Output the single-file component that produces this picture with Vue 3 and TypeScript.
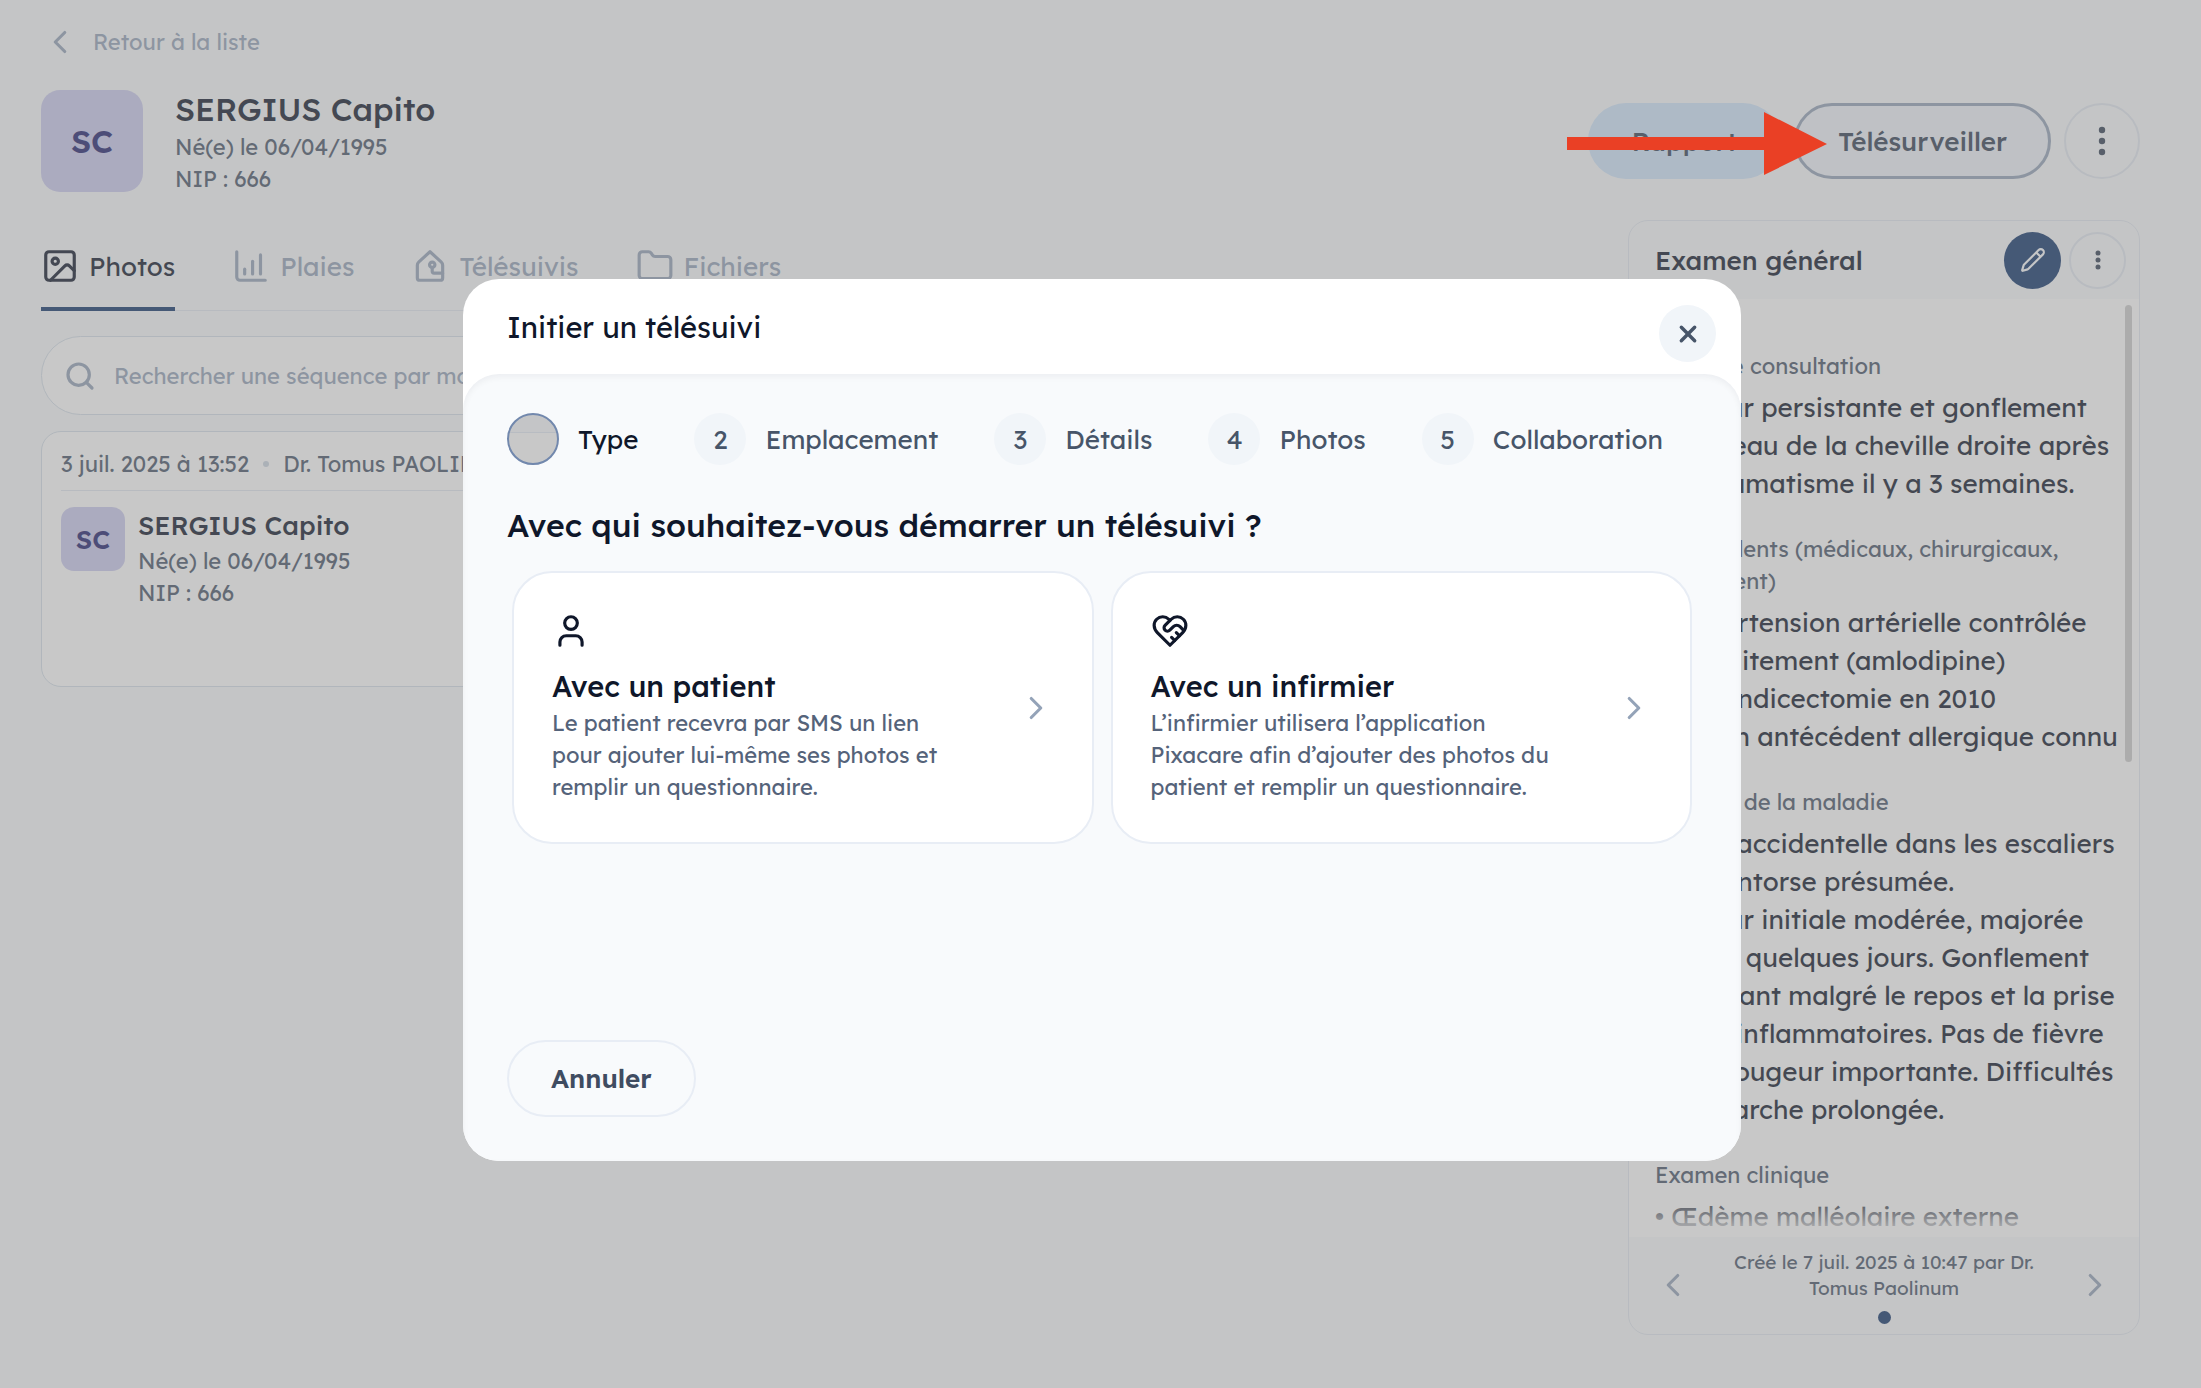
<script setup lang="ts">
import { ref } from 'vue'

const search = ref('')

interface Tab { label: string; icon: string[]; active?: boolean }
const tabs: Tab[] = [
  {
    label: 'Photos',
    active: true,
    icon: [
      'M5 3h14a2 2 0 0 1 2 2v14a2 2 0 0 1-2 2H5a2 2 0 0 1-2-2V5a2 2 0 0 1 2-2z',
      'M7 9a2 2 0 1 0 4 0a2 2 0 1 0-4 0',
      'M21 15l-3.086-3.086a2 2 0 0 0-2.828 0L6 21',
    ],
  },
  { label: 'Plaies', icon: ['M3 3v16a2 2 0 0 0 2 2h16', 'M8 17v-3', 'M13 17V9', 'M18 17V5'] },
  {
    label: 'Télésuivis',
    icon: [
      'M12 3l7 6.400a3 3 0 0 1 1 2.200V19.500a1.500 1.500 0 0 1-1.500 1.500h-13a1.500 1.500 0 0 1-1.500-1.500v-7.900a3 3 0 0 1 1-2.200z',
      'M11.700 11.200a1.700 1.700 0 1 0 3.400 0a1.700 1.700 0 1 0-3.400 0',
      'M13.400 13v2.300a1.200 1.200 0 0 0 1.200 1.200H20',
    ],
  },
  {
    label: 'Fichiers',
    icon: ['M20 20a2 2 0 0 0 2-2V8a2 2 0 0 0-2-2h-7.900a2 2 0 0 1-1.690-.9L9.600 3.900A2 2 0 0 0 7.930 3H4a2 2 0 0 0-2 2v13a2 2 0 0 0 2 2z'],
  },
]

const sections = [
  {
    label: 'Motif de consultation',
    text: 'Douleur persistante et gonflement\nau niveau de la cheville droite après\nun traumatisme il y a 3 semaines.',
  },
  {
    label: 'Antécédents (médicaux, chirurgicaux,\ntraitement)',
    text: '• Hypertension artérielle contrôlée\npar traitement (amlodipine)\n• Appendicectomie en 2010\n• Aucun antécédent allergique connu',
  },
  {
    label: 'Histoire de la maladie',
    text: 'Chute accidentelle dans les escaliers\navec entorse présumée.\nDouleur initiale modérée, majorée\ndepuis quelques jours. Gonflement\npersistant malgré le repos et la prise\nd’anti-inflammatoires. Pas de fièvre\nni de rougeur importante. Difficultés\nà la marche prolongée.',
  },
  { label: 'Examen clinique', text: '• Œdème malléolaire externe' },
]

const steps = ['Type', 'Emplacement', 'Détails', 'Photos', 'Collaboration']

const choices = [
  {
    title: 'Avec un patient',
    text: 'Le patient recevra par SMS un lien\npour ajouter lui-même ses photos et\nremplir un questionnaire.',
    icon: ['M8 7a4 4 0 1 0 8 0a4 4 0 1 0-8 0', 'M19 21v-2a4 4 0 0 0-4-4H9a4 4 0 0 0-4 4v2'],
  },
  {
    title: 'Avec un infirmier',
    text: 'L’infirmier utilisera l’application\nPixacare afin d’ajouter des photos du\npatient et remplir un questionnaire.',
    icon: [
      'M20.420 4.580a5.400 5.400 0 0 0-7.650 0l-.77.78-.77-.78a5.400 5.400 0 0 0-7.650 0C1.460 6.700 1.330 10.280 4 13l8 8 8-8c2.670-2.720 2.540-6.300.42-8.420z',
      'M12 5.360L8.870 8.500a2.130 2.130 0 0 0 0 3a2.130 2.130 0 0 0 3 0l2.260-2.210a3 3 0 0 1 4.220 0l2.400 2.400',
      'M18 15l-2-2',
      'M15 18l-2-2',
    ],
  },
]
</script>

<template>
  <div class="page">
    <a class="back" href="#">
      <svg class="icon" viewBox="0 0 24 24"><path d="M15 18l-6-6 6-6" /></svg>
      Retour à la liste
    </a>

    <header class="patient-bar">
      <div class="avatar avatar-lg">SC</div>
      <div class="identity">
        <h1>SERGIUS Capito</h1>
        <p>Né(e) le 06/04/1995</p>
        <p>NIP : 666</p>
      </div>
      <div class="actions">
        <button class="btn btn-report" type="button">Rapport</button>
        <button class="btn btn-outline" type="button">Télésurveiller</button>
        <button class="round round-lg" type="button" aria-label="Plus d’actions">
          <svg class="dots" width="32" height="40" viewBox="0 0 32 40"><circle cx="16" cy="9" r="3.200" /><circle cx="16" cy="20" r="3.200" /><circle cx="16" cy="31" r="3.200" /></svg>
        </button>
      </div>
    </header>

    <div class="columns">
      <main class="main">
        <nav class="tabs">
          <a v-for="t in tabs" :key="t.label" href="#" class="tab" :class="{ active: t.active }">
            <svg class="icon" viewBox="0 0 24 24"><path v-for="d in t.icon" :key="d" :d="d" /></svg>
            {{ t.label }}
          </a>
        </nav>
        <label class="search">
          <svg width="32" height="32" viewBox="0 0 24 24"><circle cx="11" cy="11" r="8" /><path d="M21 21l-4.300-4.300" /></svg>
          <input v-model="search" type="text" aria-label="Rechercher" placeholder="Rechercher une séquence par mot-clé" />
        </label>
        <article class="sequence">
          <div class="sequence-meta">
            <span>3 juil. 2025 à 13:52</span><i class="sep"></i><span>Dr. Tomus PAOLINUM</span>
          </div>
          <div class="sequence-body">
            <div class="avatar avatar-sm">SC</div>
            <div class="identity identity-sm">
              <h2>SERGIUS Capito</h2>
              <p>Né(e) le 06/04/1995</p>
              <p>NIP : 666</p>
            </div>
          </div>
        </article>
      </main>

      <aside class="panel">
        <div class="panel-head">
          <h2>Examen général</h2>
          <button class="round round-sm primary" type="button" aria-label="Modifier">
            <svg width="26" height="26" viewBox="0 0 24 24"><path d="M21.174 6.812a1 1 0 0 0-3.986-3.987L3.842 16.174a2 2 0 0 0-.5.83l-1.321 4.352a.5.5 0 0 0 .623.622l4.353-1.320a2 2 0 0 0 .83-.497zM15 5l4 4" /></svg>
          </button>
          <button class="round round-sm" type="button" aria-label="Options">
            <svg class="dots" width="24" height="30" viewBox="0 0 24 30"><circle cx="12" cy="8" r="2.500" /><circle cx="12" cy="15" r="2.500" /><circle cx="12" cy="22" r="2.500" /></svg>
          </button>
        </div>
        <div class="panel-body">
          <section v-for="s in sections" :key="s.label">
            <h3>{{ s.label }}</h3>
            <p>{{ s.text }}</p>
          </section>
          <span class="scroll-thumb"></span>
        </div>
        <footer class="panel-foot">
          <div class="pager">
            <button type="button" aria-label="Précédent"><svg class="icon" viewBox="0 0 24 24"><path d="M15 18l-6-6 6-6" /></svg></button>
            <p>Créé le 7 juil. 2025 à 10:47 par Dr. Tomus Paolinum</p>
            <button type="button" aria-label="Suivant"><svg class="icon" viewBox="0 0 24 24"><path d="M9 18l6-6-6-6" /></svg></button>
          </div>
          <i class="page-dot"></i>
        </footer>
      </aside>
    </div>

    <div class="overlay">
      <div class="modal" role="dialog" aria-labelledby="modal-title">
        <div class="modal-head">
          <h2 id="modal-title">Initier un télésuivi</h2>
          <button class="close" type="button" aria-label="Fermer">
            <svg width="32" height="32" viewBox="0 0 24 24"><path d="M17 7L7 17M7 7l10 10" /></svg>
          </button>
        </div>
        <div class="modal-body">
          <ol class="steps">
            <li v-for="(s, i) in steps" :key="s" :class="{ current: i === 0 }">
              <span class="num">{{ i === 0 ? '' : i + 1 }}</span>{{ s }}
            </li>
          </ol>
          <h3 class="question">Avec qui souhaitez-vous démarrer un télésuivi ?</h3>
          <div class="choices">
            <button v-for="c in choices" :key="c.title" class="choice" type="button">
              <span class="choice-main">
                <svg class="icon" viewBox="0 0 24 24"><path v-for="d in c.icon" :key="d" :d="d" /></svg>
                <strong>{{ c.title }}</strong>
                <span class="choice-text">{{ c.text }}</span>
              </span>
              <svg class="icon go" viewBox="0 0 24 24"><path d="M9 18l6-6-6-6" /></svg>
            </button>
          </div>
          <button class="cancel" type="button">Annuler</button>
        </div>
      </div>
    </div>

    <svg class="pointer" width="260" height="64" viewBox="0 0 260 64" aria-hidden="true">
      <path d="M0 25h197V0l63 32-63 31V38H0z" />
    </svg>
  </div>
</template>

<style>
body {
  margin: 0;
  background: #f8fafc;
}
</style>

<style scoped>
* {
  box-sizing: border-box;
}
.page {
  position: relative;
  min-height: 100vh;
  padding: 23px 61px 54px 41px;
  font-family: Lexend, Inter, sans-serif;
  font-size: 22px;
  color: #475569;
  background: #f8fafc;
}
h1, h2, h3, p, ol {
  margin: 0;
  padding: 0;
}
a {
  text-decoration: none;
}
button {
  font: inherit;
  color: inherit;
  padding: 0;
  border: 0;
  background: none;
}
svg {
  flex: none;
  fill: none;
  stroke: currentColor;
  stroke-width: 2;
  stroke-linecap: round;
  stroke-linejoin: round;
}
.icon {
  display: block;
  width: 38px;
  height: 38px;
}
.back {
  display: flex;
  align-items: center;
  gap: 14px;
  height: 38px;
  color: #94a3b8;
}
.patient-bar {
  display: flex;
  align-items: center;
  height: 102px;
  margin-top: 29px;
}
.avatar {
  display: flex;
  align-items: center;
  justify-content: center;
  flex: none;
  background: #cbcbee;
  color: #1f1f6e;
  font-weight: 600;
}
.avatar-lg {
  width: 102px;
  height: 102px;
  border-radius: 19px;
  font-size: 32px;
}
.avatar-sm {
  width: 64px;
  height: 64px;
  border-radius: 13px;
  font-size: 26px;
}
.identity {
  margin-left: 32px;
  line-height: 32px;
}
.identity h1 {
  font-size: 32px;
  font-weight: 500;
  line-height: 44px;
  color: #0f172a;
}
.identity-sm {
  margin-left: 13px;
}
.identity-sm h2 {
  font-size: 26px;
  font-weight: 500;
  line-height: 38px;
  color: #0f172a;
}
.actions {
  display: flex;
  gap: 13px;
  margin-left: auto;
}
.btn {
  height: 76px;
  padding: 0 44px;
  border-radius: 38px;
  font-size: 26px;
  font-weight: 500;
  color: #334155;
}
.btn-report {
  background: #cfe5fb;
}
.btn-outline {
  padding: 0 41px;
  border: 3px solid #94a3b8;
  background: #eef3f9;
}
.round {
  display: flex;
  align-items: center;
  justify-content: center;
  flex: none;
  border: 2px solid #e2e8f0;
  border-radius: 50%;
  color: #334155;
}
.round-lg {
  width: 76px;
  height: 76px;
}
.round-sm {
  width: 57px;
  height: 57px;
}
.dots {
  fill: currentColor;
  stroke: none;
}
.primary {
  border: 0;
  background: #12356a;
  color: #f8fafc;
}
.columns {
  display: flex;
  align-items: flex-start;
  gap: 26px;
  margin-top: 28px;
}
.main {
  flex: 1;
  min-width: 0;
}
.tabs {
  display: flex;
  gap: 57px;
  height: 91px;
  border-bottom: 1px solid #e2e8f0;
}
.tab {
  display: flex;
  align-items: center;
  gap: 10px;
  height: 91px;
  padding-top: 5px;
  border-bottom: 4px solid transparent;
  font-size: 26px;
  color: #94a3b8;
}
.tab.active {
  color: #0f172a;
  border-color: #12356a;
}
.search {
  display: flex;
  align-items: center;
  gap: 16px;
  height: 79px;
  margin-top: 25px;
  padding: 0 22px;
  border: 1px solid #d5dfe9;
  border-radius: 40px;
  background: #fff;
  color: #94a3b8;
}
.search svg {
  stroke-width: 2.4;
}
.search input {
  flex: 1;
  min-width: 0;
  border: 0;
  outline: 0;
  background: none;
  font: inherit;
  color: #0f172a;
}
.search input::placeholder {
  color: #94a3b8;
  opacity: 1;
}
.sequence {
  min-height: 256px;
  margin-top: 16px;
  padding: 0 19px;
  border: 1px solid #d5dfe9;
  border-radius: 20px;
  background: #fff;
}
.sequence-meta {
  display: flex;
  align-items: center;
  gap: 14px;
  height: 59px;
  padding-top: 5px;
  border-bottom: 1px solid #e2e8f0;
}
.sep {
  width: 6px;
  height: 6px;
  border-radius: 50%;
  background: #cbd5e1;
}
.sequence-body {
  display: flex;
  align-items: flex-start;
  padding-top: 16px;
}
.panel {
  display: flex;
  flex-direction: column;
  flex: none;
  width: 512px;
  border: 1px solid #e2e8f0;
  border-radius: 20px;
  overflow: hidden;
}
.panel-head {
  display: flex;
  align-items: center;
  gap: 8px;
  height: 78px;
  padding: 0 13px 0 26px;
}
.panel-head h2 {
  margin-right: auto;
  font-size: 26px;
  font-weight: 500;
  color: #0f172a;
}
.panel-body {
  position: relative;
  height: 938px;
  padding: 51px 26px 0;
  overflow: hidden;
  background: #fff;
}
.panel-body::after {
  content: '';
  position: absolute;
  left: 0;
  right: 0;
  bottom: 0;
  height: 40px;
  background: linear-gradient(rgba(255, 255, 255, 0), #fff);
}
.panel-body section {
  margin-bottom: 30px;
  white-space: pre;
}
.panel-body h3 {
  font-size: 22px;
  font-weight: 400;
  line-height: 32px;
}
.panel-body p {
  padding-top: 7px;
  font-size: 26px;
  line-height: 38px;
  color: #0f172a;
}
.scroll-thumb {
  position: absolute;
  top: 6px;
  right: 7px;
  width: 7px;
  height: 457px;
  border-radius: 4px;
  background: #cdcdcd;
}
.panel-foot {
  display: flex;
  flex-direction: column;
  align-items: center;
  height: 97px;
  padding: 12px 25px 0;
}
.pager {
  display: flex;
  align-items: flex-end;
  justify-content: space-between;
  align-self: stretch;
  height: 55px;
  color: #94a3b8;
}
.pager p {
  align-self: flex-start;
  width: 320px;
  font-size: 19px;
  line-height: 26px;
  text-align: center;
  color: #475569;
}
.page-dot {
  width: 13px;
  height: 13px;
  margin-top: 7px;
  border-radius: 50%;
  background: #12356a;
}
.overlay {
  position: absolute;
  inset: 0;
  display: flex;
  align-items: flex-start;
  justify-content: center;
  padding: 279px 24px 24px 27px;
  background: rgba(133, 133, 133, 0.45);
}
.modal {
  flex: 0 1 1278px;
  border-radius: 36px;
  overflow: hidden;
  background: #fff;
}
.modal-head {
  display: flex;
  align-items: flex-start;
  justify-content: space-between;
  height: 95px;
  padding: 26px 25px 0 44px;
}
.modal-head h2 {
  font-size: 29px;
  font-weight: 400;
  line-height: 44px;
  color: #0f172a;
}
.close {
  display: flex;
  align-items: center;
  justify-content: center;
  width: 57px;
  height: 57px;
  border-radius: 50%;
  background: #f1f5f9;
  color: #475569;
}
.close svg {
  stroke-width: 2.6;
}
.modal-body {
  padding: 39px 44px 44px;
  border-radius: 36px 36px 0 0;
  background: #f8fafc;
  box-shadow: inset 0 3px 6px rgba(15, 23, 42, 0.05);
}
.steps {
  display: flex;
  gap: 56px;
  list-style: none;
  font-size: 26px;
}
.steps li {
  display: flex;
  align-items: center;
  gap: 19px;
}
.num {
  display: flex;
  align-items: center;
  justify-content: center;
  width: 52px;
  height: 52px;
  border-radius: 50%;
  background: #f1f5f9;
}
.current {
  color: #0f172a;
}
.current .num {
  border: 2px solid #7288ad;
  background: linear-gradient(#c4c5c7 17px, #b8bcc2 17px, #b8bcc2 18px, #c8c8c8 18px);
}
.question {
  margin-top: 38px;
  font-size: 32px;
  font-weight: 500;
  line-height: 44px;
  color: #0f172a;
}
.choices {
  display: grid;
  grid-template-columns: 1fr 1fr;
  gap: 17px;
  padding: 24px 5px 0;
}
.choice {
  display: flex;
  align-items: center;
  justify-content: space-between;
  height: 273px;
  padding: 0 37px 0 38px;
  border: 2px solid #e8edf5;
  border-radius: 40px;
  background: #fff;
  text-align: left;
}
.choice-main {
  display: flex;
  flex-direction: column;
  color: #0f172a;
}
.choice-main strong {
  margin-top: 15px;
  font-size: 29px;
  font-weight: 500;
  line-height: 42px;
}
.choice-text {
  line-height: 32px;
  white-space: pre-line;
  color: #55637a;
}
.go {
  color: #94a3b8;
}
.cancel {
  display: block;
  height: 77px;
  margin-top: 196px;
  padding: 0 42px;
  border: 2px solid #e8edf5;
  border-radius: 39px;
  font-size: 26px;
  font-weight: 600;
  color: #3f4c61;
}
.pointer {
  position: absolute;
  top: 112px;
  right: 374px;
  fill: #ea4025;
  stroke: none;
}
</style>
